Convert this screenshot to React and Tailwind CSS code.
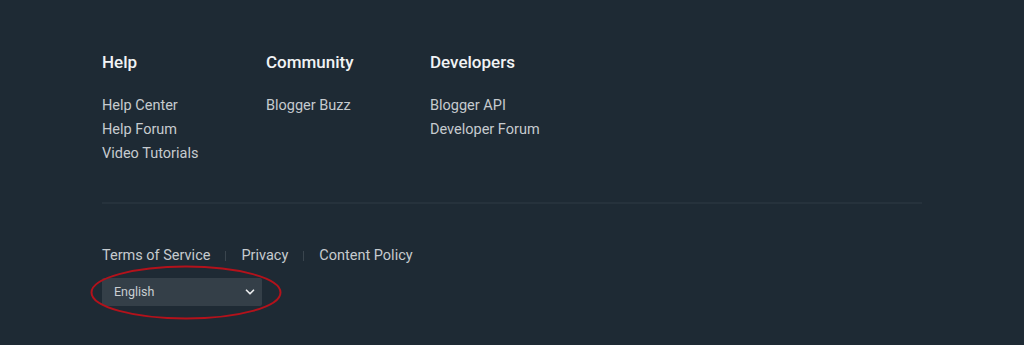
import React from "react";

const cols = [
  { title: "Help", links: ["Help Center", "Help Forum", "Video Tutorials"] },
  { title: "Community", links: ["Blogger Buzz"] },
  { title: "Developers", links: ["Blogger API", "Developer Forum"] },
];

export default function App() {
  return (
    <div
      className="w-[1024px] h-[345px] bg-[#1e2a34] overflow-hidden"
      style={{ fontFamily: "Roboto, 'Liberation Sans', sans-serif" }}
    >
      <div className="ml-[102px] w-[820px] pt-[50px]">
        <div className="flex">
          {cols.map((c) => (
            <div key={c.title} className="w-[164px]">
              <h3 className="text-[17px] leading-[24px] font-medium text-[#f1f3f4]">{c.title}</h3>
              <ul className="mt-[20px] flex flex-col">
                {c.links.map((l) => (
                  <li key={l} className="text-[14.5px] leading-[24px] text-[#c6cbcf]">{l}</li>
                ))}
              </ul>
            </div>
          ))}
        </div>
        <div className="mt-[36px] h-[2px] bg-[#26323c]" />
        <div className="mt-[40px] flex items-center text-[14.5px] leading-[24px] text-[#c6cbcf]">
          <span>Terms of Service</span>
          <span className="mx-[15px] w-px h-[10px] bg-[#3a454e]" />
          <span>Privacy</span>
          <span className="mx-[15px] w-px h-[10px] bg-[#3a454e]" />
          <span>Content Policy</span>
        </div>
        <div className="relative mt-[10px] w-[160px] h-[28px]">
          <div className="w-[160px] h-[28px] bg-[#343f48] rounded-[2px] flex items-center justify-between pl-[12px] pr-[5px]">
            <span className="text-[12.5px] text-[#c9ced2]">English</span>
            <svg width="14" height="14" viewBox="0 0 24 24" fill="none" stroke="#e8eaec" strokeWidth="3" strokeLinecap="round" strokeLinejoin="round">
              <polyline points="6 9 12 15 18 9" />
            </svg>
          </div>
          <svg
            className="absolute left-[-13px] top-[-13px] pointer-events-none"
            width="194"
            height="56"
            viewBox="0 0 194 56"
          >
            <ellipse cx="97" cy="27.5" rx="94.5" ry="26" fill="none" stroke="#b3121b" strokeWidth="2" />
          </svg>
        </div>
      </div>
    </div>
  );
}
